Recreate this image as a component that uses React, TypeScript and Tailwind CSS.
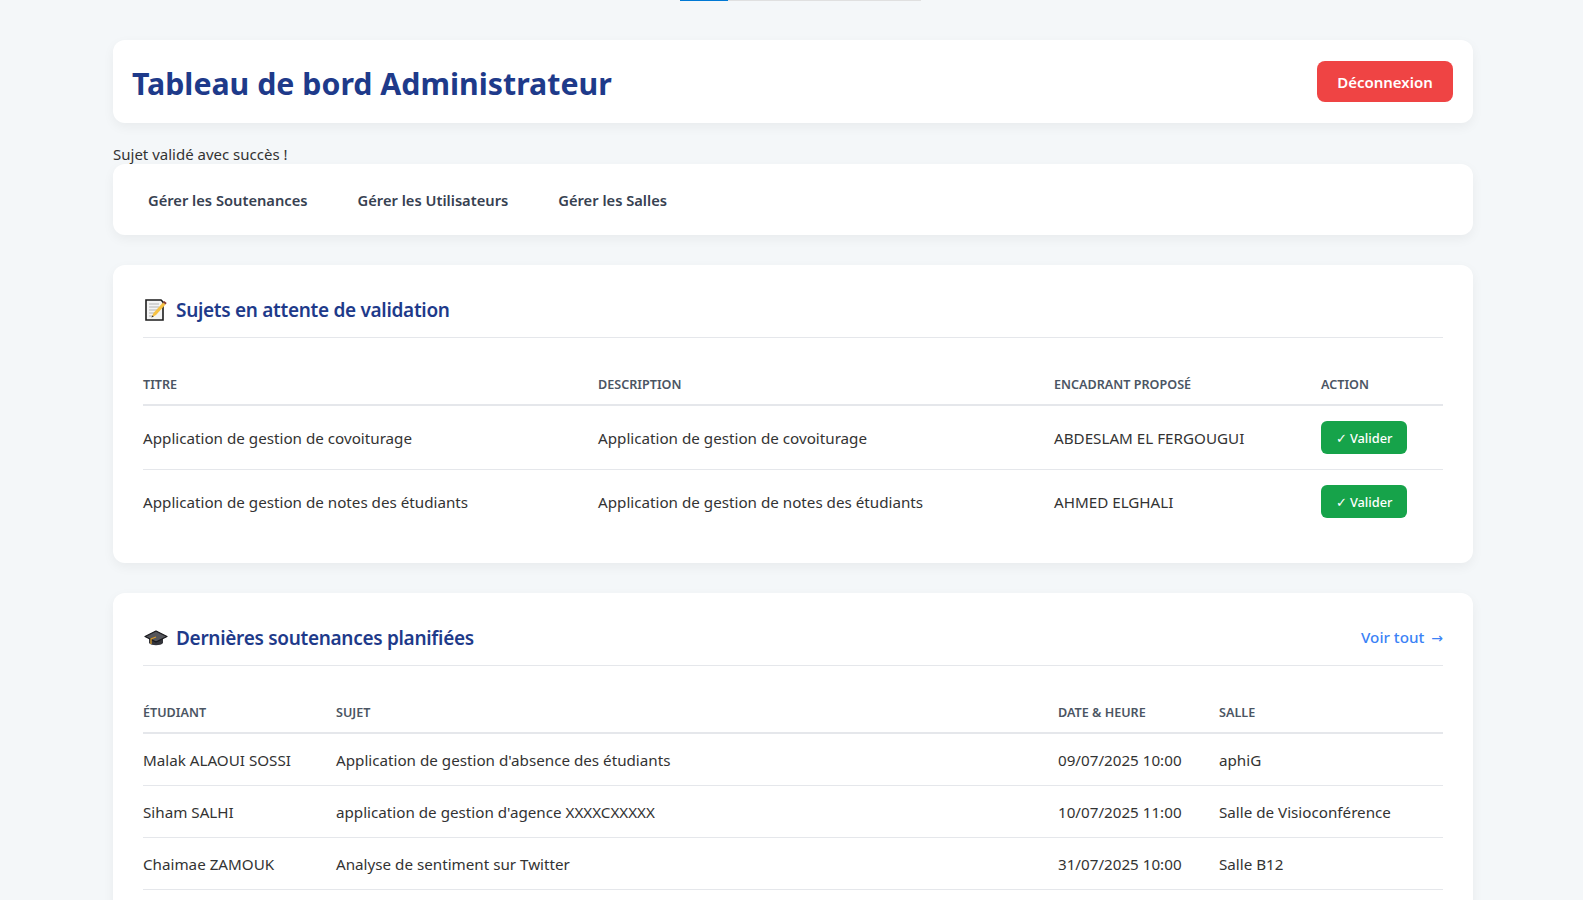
import React from 'react';

const sujets = [
  { titre: 'Application de gestion de covoiturage', encadrant: 'ABDESLAM EL FERGOUGUI' },
  { titre: 'Application de gestion de notes des étudiants', encadrant: 'AHMED ELGHALI' },
];

const soutenances = [
  { etudiant: 'Malak ALAOUI SOSSI', sujet: "Application de gestion d'absence des étudiants", date: '09/07/2025 10:00', salle: 'aphiG' },
  { etudiant: 'Siham SALHI', sujet: "application de gestion d'agence XXXXCXXXXX", date: '10/07/2025 11:00', salle: 'Salle de Visioconférence' },
  { etudiant: 'Chaimae ZAMOUK', sujet: 'Analyse de sentiment sur Twitter', date: '31/07/2025 10:00', salle: 'Salle B12' },
];

function MemoIcon() {
  return (
    <svg viewBox="0 0 22 22" className="w-[22px] h-[22px] shrink-0">
      <path d="M1 1h15l2 2v18H1z" fill="#f4f4f4" stroke="#1c1c1c" strokeWidth="1.6" />
      <path d="M4 5h10M4 8h10M4 11h10M4 14h7M4 17h5" stroke="#b4b4b4" strokeWidth="1" />
      <path d="M6.5 18.5l2-4.5L18 3.5l2.5 2L11 16z" fill="#f6c244" />
      <path d="M18 3.5l1.2-1.5 2.5 2-1.2 1.5z" fill="#8a3b2e" />
      <path d="M6.5 18.500l.8-2 1.4 1.100z" fill="#333" />
    </svg>
  );
}

function CapIcon() {
  return (
    <svg viewBox="0 0 24 17" className="w-6 h-[17px] mt-px shrink-0">
      <path d="M5 7v6c2 3 12 3 14 0V7z" fill="#33343a" />
      <path d="M12 1L1 6.5 12 12l11-5.500z" fill="#55565c" stroke="#16161a" strokeWidth="1.2" strokeLinejoin="round" />
      <path d="M12 7L7 9v5" fill="none" stroke="#d79a2b" strokeWidth="1.300" />
    </svg>
  );
}

function SectionTitle({ icon, label, right }: { icon: React.ReactNode; label: string; right?: React.ReactNode }) {
  return (
    <div className="flex items-center justify-between h-[27px] mb-5 box-content pb-[15px] border-b border-[#e5e7eb]">
      <h2 className="flex items-center gap-[7px] pt-[2px] text-[19px] leading-[26px] tracking-[-0.3px] font-semibold text-[#1e3a8a]">
        <span className="flex justify-center w-[26px]">{icon}</span>
        {label}
      </h2>
      {right}
    </div>
  );
}

function Th({ children, className }: { children: React.ReactNode; className?: string }) {
  return (
    <th className={`pt-[18px] pb-[11px] text-left text-[12.6px] leading-[17px] font-semibold uppercase text-[#4b5563] border-b-2 border-[#e5e7eb] ${className ?? ''}`}>
      {children}
    </th>
  );
}

function Td({ children }: { children: React.ReactNode }) {
  return <td className="pt-4 pb-[14px] text-[15.2px]">{children}</td>;
}

export default function App() {
  return (
    <div className="h-screen overflow-hidden bg-[#f4f7f9] text-[#333333] text-[15px] leading-[21px] font-['Noto_Sans',sans-serif]">
      <div className="flex h-px pl-[680px]">
        <div className="w-12 bg-[#0078d4]" />
        <div className="w-[193px] bg-[#e0e0e0]" />
      </div>

      <div className="w-[1360px] ml-[113px] pt-[39px]">
        <header className="flex items-center justify-between h-[83px] px-5 bg-white rounded-xl shadow-[0_4px_12px_rgba(0,0,0,0.05)] mb-5">
          <h1 className="-ml-px pt-[3px] text-[30.3px] leading-[43px] font-bold text-[#1e3a8a]">Tableau de bord Administrateur</h1>
          <button className="h-[41px] w-[136px] pt-px rounded-lg bg-[#ef4444] text-white font-semibold">Déconnexion</button>
        </header>

        <p className="h-[21px] leading-[23px]">Sujet validé avec succès !</p>

        <nav className="flex gap-2.5 p-[15px] bg-white rounded-xl shadow-[0_4px_12px_rgba(0,0,0,0.05)] mb-[30px]">
          {['Gérer les Soutenances', 'Gérer les Utilisateurs', 'Gérer les Salles'].map((item) => (
            <a key={item} className="px-5 pt-[11px] pb-[9px] text-[14.7px] font-semibold text-[#374151]">{item}</a>
          ))}
        </nav>

        <section className="p-[30px] bg-white rounded-xl shadow-[0_4px_12px_rgba(0,0,0,0.05)] mb-[30px]">
          <SectionTitle icon={<MemoIcon />} label="Sujets en attente de validation" />
          <table className="w-full table-fixed border-collapse">
            <thead>
              <tr>
                <Th className="w-[455px]">Titre</Th>
                <Th className="w-[456px]">Description</Th>
                <Th className="w-[267px]">Encadrant proposé</Th>
                <Th>Action</Th>
              </tr>
            </thead>
            <tbody>
              {sujets.map((s, i) => (
                <tr key={s.titre} className={i < sujets.length - 1 ? 'border-b border-[#e5e7eb]' : ''}>
                  <Td>{s.titre}</Td>
                  <Td>{s.titre}</Td>
                  <Td>{s.encadrant}</Td>
                  <td className="py-[15px]">
                    <button className="block h-[33px] w-[86px] pt-px rounded-md bg-[#16a34a] text-white text-[12.8px] font-medium">✓ Valider</button>
                  </td>
                </tr>
              ))}
            </tbody>
          </table>
        </section>

        <section className="p-[30px] bg-white rounded-xl shadow-[0_4px_12px_rgba(0,0,0,0.05)]">
          <SectionTitle
            icon={<CapIcon />}
            label="Dernières soutenances planifiées"
            right={
              <a className="pt-[2px] text-[15.2px] font-medium text-[#3b82f6]">
                Voir tout <span className="ml-[3px] font-['DejaVu_Sans',sans-serif] text-[14px]">→</span>
              </a>
            }
          />
          <table className="w-full table-fixed border-collapse">
            <thead>
              <tr>
                <Th className="w-[193px]">Étudiant</Th>
                <Th className="w-[722px]">Sujet</Th>
                <Th className="w-[161px]">Date &amp; heure</Th>
                <Th>Salle</Th>
              </tr>
            </thead>
            <tbody>
              {soutenances.map((s) => (
                <tr key={s.etudiant} className="border-b border-[#e5e7eb]">
                  <Td>{s.etudiant}</Td>
                  <Td>{s.sujet}</Td>
                  <Td>{s.date}</Td>
                  <Td>{s.salle}</Td>
                </tr>
              ))}
            </tbody>
          </table>
        </section>
      </div>
    </div>
  );
}
